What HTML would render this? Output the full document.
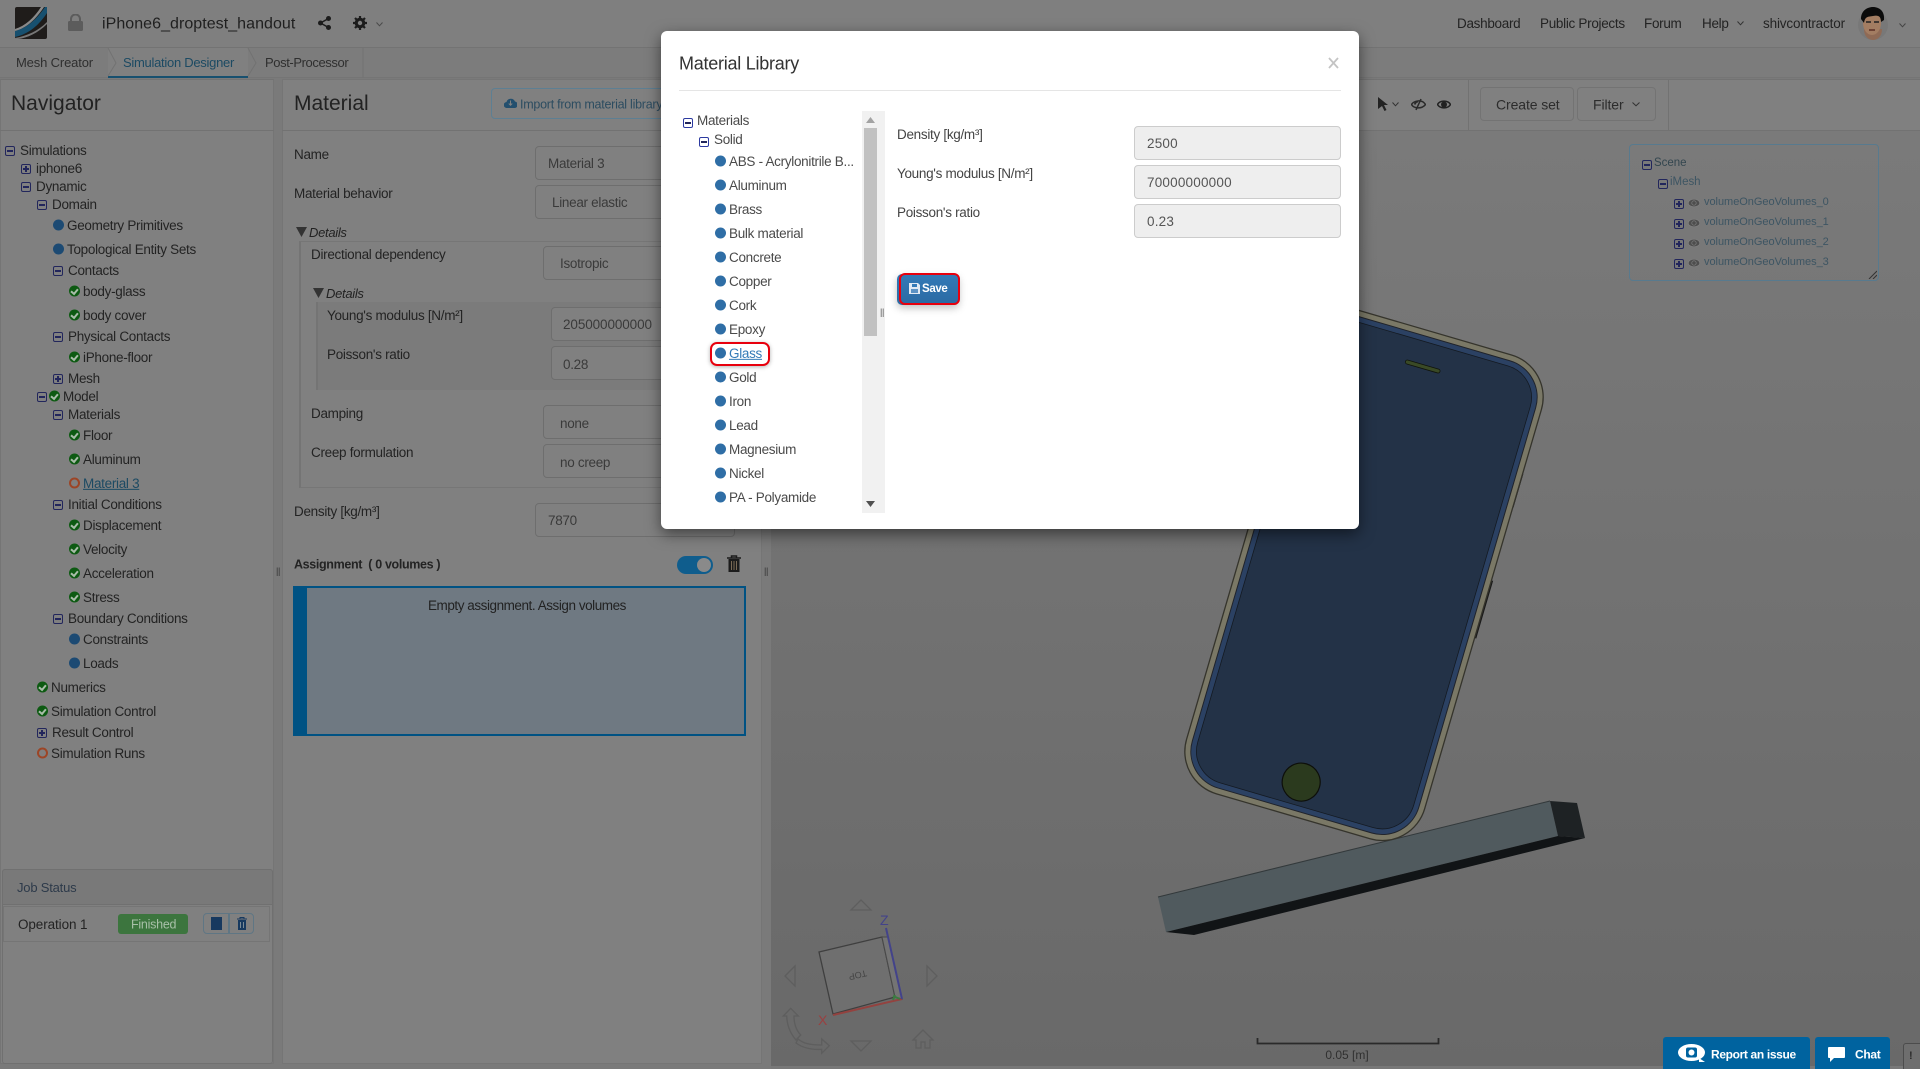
<!DOCTYPE html>
<html lang="en"><head><meta charset="utf-8"><title>Material Library</title>
<style>
html,body{margin:0;padding:0;width:1920px;height:1069px;overflow:hidden;background:#7a7a7a}
body{position:relative;font-family:"Liberation Sans",sans-serif;font-size:13.5px;color:#232323}
.a{position:absolute;box-sizing:border-box}
.t{position:absolute;white-space:nowrap;line-height:1;transform:translateY(calc(-50% + .6px));letter-spacing:-.3px}
.m,.p{position:absolute;width:10px;height:10px;border:1px solid #22265c;border-radius:2px;box-sizing:border-box;transform:translateY(-40%)}
.m:after,.p:after{content:"";position:absolute;left:1px;right:1px;top:3px;height:2px;background:#22265c}
.p:before{content:"";position:absolute;top:1px;bottom:1px;left:3px;width:2px;background:#22265c}
.d{position:absolute;width:11px;height:11px;border-radius:50%;background:#1c4a73;transform:translateY(-50%)}
.c{position:absolute;width:11px;height:11px;border-radius:50%;background:#0d5a12;transform:translateY(-50%)}
.c:after{content:"";position:absolute;left:3px;top:1.5px;width:3px;height:5px;border:solid #a9bda9;border-width:0 2px 2px 0;transform:rotate(40deg)}
.r{position:absolute;width:11px;height:11px;border-radius:50%;border:2px solid #9c4526;box-sizing:border-box;transform:translateY(-50%)}
.f{position:absolute;box-sizing:border-box;border:1px solid #6e6e6e;border-radius:4px;background:#808080}
.mi .d{background:#2f6ea6}
.mi .t{color:#4a4a4a}
.in{position:absolute;box-sizing:border-box;left:1134px;width:207px;height:34px;background:#eeeeee;border:1px solid #cccccc;border-radius:4px;color:#555;padding-left:12px;line-height:33px;letter-spacing:.2px}
.bl{color:#3d5563;font-size:11px;letter-spacing:-.03px}
</style></head><body>

<!-- header -->
<div class="a" style="left:0;top:0;width:1920px;height:48px;background:#7f7f7f;border-bottom:1px solid #737373"></div>
<svg class="a" style="left:15px;top:7px" width="32" height="32" viewBox="0 0 32 32"><rect width="32" height="32" rx="2" fill="#1f1c1a"/><path d="M0 24C12 21 22 12 30 0H32V6C24 18 14 27 0 30Z" fill="#17506f"/><path d="M0 22C10 19 19 11 26 0H29C21 12 12 21 0 24Z" fill="#8a8a8a"/><path d="M0 31C12 29 23 24 32 15V17C23 26 12 31 3 32H0Z" fill="#777"/></svg>
<svg class="a" style="left:68px;top:14px" width="15" height="17" viewBox="0 0 15 17"><path d="M3 8V5a4.500 4.500 0 0 1 9 0V8" fill="none" stroke="#5c5c5c" stroke-width="2"/><rect x="0" y="7" width="15" height="10" rx="1.500" fill="#5c5c5c"/></svg>
<div class="t" style="left:102px;top:24px;font-size:16px;font-weight:400;color:#1f1f1f;letter-spacing:.05px">iPhone6_droptest_handout</div>
<svg class="a" style="left:318px;top:16px" width="13" height="14" viewBox="0 0 13 14"><circle cx="10.500" cy="2.500" r="2.500" fill="#1c1c1c"/><circle cx="2.500" cy="7" r="2.500" fill="#1c1c1c"/><circle cx="10.500" cy="11.500" r="2.500" fill="#1c1c1c"/><path d="M10.500 2.500L2.500 7L10.500 11.500" stroke="#1c1c1c" stroke-width="1.500" fill="none"/></svg>
<svg class="a" style="left:353px;top:16px" width="14" height="14" viewBox="0 0 14 14"><circle cx="7" cy="7" r="3.800" fill="none" stroke="#1c1c1c" stroke-width="3"/><path d="M7 0V14M0 7H14M2 2L12 12M12 2L2 12" stroke="#1c1c1c" stroke-width="2.200"/><circle cx="7" cy="7" r="2.200" fill="#7f7f7f"/></svg>
<svg class="a" style="left:376px;top:22px" width="7" height="5" viewBox="0 0 7 5"><path d="M.5 .5L3.500 3.800L6.500 .5" fill="none" stroke="#4a4a4a"/></svg>
<div class="t" style="left:1457px;top:23px">Dashboard</div>
<div class="t" style="left:1540px;top:23px">Public Projects</div>
<div class="t" style="left:1644px;top:23px">Forum</div>
<div class="t" style="left:1702px;top:23px">Help</div>
<svg class="a" style="left:1737px;top:21px" width="7" height="5" viewBox="0 0 7 5"><path d="M.5 .5L3.500 3.800L6.500 .5" fill="none" stroke="#333"/></svg>
<div class="t" style="left:1763px;top:23px;letter-spacing:-.15px">shivcontractor</div>
<svg class="a" style="left:1858px;top:7px" width="30" height="33" viewBox="0 0 30 33"><ellipse cx="15" cy="18" rx="15" ry="15" fill="#787878"/><path d="M6 22C6 30 11 33 15 33S24 30 24 22Z" fill="#8f6a55"/><ellipse cx="14" cy="16" rx="9" ry="12" fill="#a37d62"/><path d="M3 12C3 3 10 0 15 0S27 3 26 13L23 15C23 9 20 8 15 9C10 10 7 9 6 16Z" fill="#0b0b0b"/><path d="M8 15h5M16 15h5" stroke="#222" stroke-width="1.500"/><path d="M11 23h6" stroke="#5b2f25" stroke-width="1.500"/></svg>
<svg class="a" style="left:1899px;top:23px" width="7" height="5" viewBox="0 0 7 5"><path d="M.5 .5L3.500 3.800L6.500 .5" fill="none" stroke="#444"/></svg>

<!-- tabs -->
<div class="a" style="left:0;top:48px;width:1920px;height:30px;background:#7c7c7c;border-bottom:1px solid #757575"></div>
<div class="a" style="left:108px;top:48px;width:140px;height:30px;background:#808080;border-bottom:2px solid #17506f"></div>
<svg class="a" style="left:100px;top:48px" width="270" height="30" viewBox="0 0 270 30" fill="none" stroke="#727272"><path d="M8 0L16 15L8 28"/><path d="M148 0L156 15L148 28"/><path d="M263 0V30"/></svg>
<div class="t" style="left:16px;top:62px;color:#2f2f2f;font-size:13px;letter-spacing:-.15px">Mesh Creator</div>
<div class="t" style="left:123px;top:62px;color:#1c4a63;font-size:13px;letter-spacing:-.28px">Simulation Designer</div>
<div class="t" style="left:265px;top:62px;color:#2f2f2f;font-size:13px;letter-spacing:-.4px">Post-Processor</div>

<!-- navigator -->
<div class="a" style="left:0;top:79px;width:274px;height:985px;background:#808080;border:1px solid #757575;border-top-color:#727272"></div>
<div class="a" style="left:0;top:130px;width:274px;height:1px;background:#727272"></div>
<div class="t" style="left:11px;top:103px;font-size:21px;font-weight:400;color:#222;letter-spacing:0">Navigator</div>

<i class="m" style="left:5px;top:150px"></i><div class="t" style="left:20px;top:150px">Simulations</div>
<i class="p" style="left:21px;top:168px"></i><div class="t" style="left:36px;top:168px">iphone6</div>
<i class="m" style="left:21px;top:186px"></i><div class="t" style="left:36px;top:186px">Dynamic</div>
<i class="m" style="left:37px;top:204px"></i><div class="t" style="left:52px;top:204px">Domain</div>
<i class="d" style="left:53px;top:225px"></i><div class="t" style="left:67px;top:225px">Geometry Primitives</div>
<i class="d" style="left:53px;top:249px"></i><div class="t" style="left:67px;top:249px">Topological Entity Sets</div>
<i class="m" style="left:53px;top:270px"></i><div class="t" style="left:68px;top:270px">Contacts</div>
<i class="c" style="left:69px;top:291px"></i><div class="t" style="left:83px;top:291px">body-glass</div>
<i class="c" style="left:69px;top:315px"></i><div class="t" style="left:83px;top:315px">body cover</div>
<i class="m" style="left:53px;top:336px"></i><div class="t" style="left:68px;top:336px">Physical Contacts</div>
<i class="c" style="left:69px;top:357px"></i><div class="t" style="left:83px;top:357px">iPhone-floor</div>
<i class="p" style="left:53px;top:378px"></i><div class="t" style="left:68px;top:378px">Mesh</div>
<i class="m" style="left:37px;top:396px"></i><i class="c" style="left:49px;top:396px"></i><div class="t" style="left:63px;top:396px">Model</div>
<i class="m" style="left:53px;top:414px"></i><div class="t" style="left:68px;top:414px">Materials</div>
<i class="c" style="left:69px;top:435px"></i><div class="t" style="left:83px;top:435px">Floor</div>
<i class="c" style="left:69px;top:459px"></i><div class="t" style="left:83px;top:459px">Aluminum</div>
<i class="r" style="left:69px;top:483px"></i><div class="t" style="left:83px;top:483px;color:#1c4a63;text-decoration:underline">Material 3</div>
<i class="m" style="left:53px;top:504px"></i><div class="t" style="left:68px;top:504px">Initial Conditions</div>
<i class="c" style="left:69px;top:525px"></i><div class="t" style="left:83px;top:525px">Displacement</div>
<i class="c" style="left:69px;top:549px"></i><div class="t" style="left:83px;top:549px">Velocity</div>
<i class="c" style="left:69px;top:573px"></i><div class="t" style="left:83px;top:573px">Acceleration</div>
<i class="c" style="left:69px;top:597px"></i><div class="t" style="left:83px;top:597px">Stress</div>
<i class="m" style="left:53px;top:618px"></i><div class="t" style="left:68px;top:618px">Boundary Conditions</div>
<i class="d" style="left:69px;top:639px"></i><div class="t" style="left:83px;top:639px">Constraints</div>
<i class="d" style="left:69px;top:663px"></i><div class="t" style="left:83px;top:663px">Loads</div>
<i class="c" style="left:37px;top:687px"></i><div class="t" style="left:51px;top:687px">Numerics</div>
<i class="c" style="left:37px;top:711px"></i><div class="t" style="left:51px;top:711px">Simulation Control</div>
<i class="p" style="left:37px;top:732px"></i><div class="t" style="left:52px;top:732px">Result Control</div>
<i class="r" style="left:37px;top:753px"></i><div class="t" style="left:51px;top:753px">Simulation Runs</div>

<!-- job status -->
<div class="a" style="left:2px;top:869px;width:271px;height:195px;border:1px solid #707070;border-radius:3px;background:#808080"></div>
<div class="a" style="left:2px;top:869px;width:271px;height:36px;background:#797979;border:1px solid #707070;border-radius:3px 3px 0 0"></div>
<div class="t" style="left:17px;top:887px;color:#2d3a4a;font-size:13px;letter-spacing:-.2px">Job Status</div>
<div class="a" style="left:3px;top:906px;width:267px;height:36px;border:1px solid #757575"></div>
<div class="t" style="left:18px;top:924px;letter-spacing:-.1px">Operation 1</div>
<div class="a" style="left:118px;top:914px;width:70px;height:20px;background:#3c753e;border-radius:3px"></div>
<div class="t" style="left:131px;top:924px;color:#a8c0a8;font-size:12.500px;letter-spacing:-.25px">Finished</div>
<div class="a" style="left:203px;top:913px;width:26px;height:21px;border:1px solid #5f7684;border-radius:4px 0 0 4px"></div>
<div class="a" style="left:229px;top:913px;width:25px;height:21px;border:1px solid #5f7684;border-radius:0 4px 4px 0"></div>
<div class="a" style="left:211px;top:917px;width:11px;height:13px;background:#17395f"></div>
<svg class="a" style="left:237px;top:917px" width="10" height="13" viewBox="0 0 10 13"><path d="M0 2H10M3 2V.5H7V2" stroke="#17395f" fill="none"/><path d="M1 3H9V13H1Z" fill="#17395f"/><path d="M3.500 5V11M6.500 5V11" stroke="#7a8a95"/></svg>

<!-- material panel -->
<div class="a" style="left:282px;top:79px;width:480px;height:985px;background:#808080;border:1px solid #757575"></div>
<div class="a" style="left:282px;top:130px;width:480px;height:1px;background:#727272"></div>
<div class="t" style="left:294px;top:103px;font-size:21px;color:#222;letter-spacing:0">Material</div>
<div class="a" style="left:491px;top:88px;width:200px;height:31px;border:1px solid #5d7f93;border-radius:4px"></div>
<svg class="a" style="left:504px;top:97px" width="13" height="11" viewBox="0 0 13 11"><path d="M3 11a3 3 0 0 1-.5-6A4.500 4.500 0 0 1 11 4.500a3.200 3.200 0 0 1-1 6.500Z" fill="#234f6e"/><path d="M6.500 3.500V8M4.800 6.500L6.500 8.300L8.200 6.500" stroke="#808080" fill="none"/></svg>
<div class="t" style="left:520px;top:104px;font-size:12.500px;color:#2c4c60;letter-spacing:-.25px">Import from material library</div>

<div class="t" style="left:294px;top:154px">Name</div>
<div class="f" style="left:535px;top:146px;width:200px;height:34px"></div><div class="t" style="left:548px;top:163px;color:#3a3a3a">Material 3</div>
<div class="t" style="left:294px;top:193px">Material behavior</div>
<div class="f" style="left:535px;top:185px;width:200px;height:34px"></div><div class="t" style="left:552px;top:202px;color:#3a3a3a">Linear elastic</div>
<svg class="a" style="left:296px;top:227px" width="11" height="10"><path d="M0 0H11L5.500 10Z" fill="#333"/></svg>
<div class="t" style="left:309px;top:232px;font-style:italic;font-size:13px;color:#222">Details</div>
<div class="a" style="left:299px;top:241px;width:460px;height:247px;border-left:2px solid #747474;border-top:1px solid #767676;border-bottom:1px solid #767676"></div>
<div class="t" style="left:311px;top:254px">Directional dependency</div>
<div class="f" style="left:543px;top:246px;width:200px;height:34px"></div><div class="t" style="left:560px;top:263px;color:#3a3a3a">Isotropic</div>
<svg class="a" style="left:313px;top:288px" width="11" height="10"><path d="M0 0H11L5.500 10Z" fill="#333"/></svg>
<div class="t" style="left:326px;top:293px;font-style:italic;font-size:13px;color:#222">Details</div>
<div class="a" style="left:316px;top:302px;width:440px;height:88px;background:#7b7b7b;border-left:2px solid #747474"></div>
<div class="t" style="left:327px;top:315px">Young's modulus [N/m²]</div>
<div class="f" style="left:551px;top:307px;width:190px;height:34px"></div><div class="t" style="left:563px;top:324px;color:#3a3a3a;letter-spacing:-.1px">205000000000</div>
<div class="t" style="left:327px;top:354px">Poisson's ratio</div>
<div class="f" style="left:551px;top:346px;width:190px;height:34px"></div><div class="t" style="left:563px;top:364px;color:#3a3a3a">0.28</div>
<div class="t" style="left:311px;top:413px">Damping</div>
<div class="f" style="left:543px;top:405px;width:200px;height:34px"></div><div class="t" style="left:560px;top:423px;color:#3a3a3a">none</div>
<div class="t" style="left:311px;top:452px">Creep formulation</div>
<div class="f" style="left:543px;top:444px;width:200px;height:34px"></div><div class="t" style="left:560px;top:462px;color:#3a3a3a">no creep</div>
<div class="t" style="left:294px;top:511px">Density [kg/m³]</div>
<div class="f" style="left:535px;top:503px;width:200px;height:34px"></div><div class="t" style="left:548px;top:520px;color:#3a3a3a">7870</div>
<div class="t" style="left:294px;top:564px;font-weight:bold;font-size:12.500px;letter-spacing:-.35px">Assignment &nbsp;( 0 volumes )</div>
<div class="a" style="left:677px;top:556px;width:36px;height:18px;border-radius:9px;background:#0f5d8d"></div>
<div class="a" style="left:697px;top:558px;width:14px;height:14px;border-radius:50%;background:#8a8a8a"></div>
<svg class="a" style="left:727px;top:555px" width="14" height="17" viewBox="0 0 14 17"><path d="M0 3H14M4.500 3V1H9.500V3" stroke="#1c1c1c" stroke-width="1.500" fill="none"/><path d="M1.500 4H12.500V17H1.500Z" fill="#1c1c1c"/><path d="M4.500 6V15M7 6V15M9.500 6V15" stroke="#7a6a55"/></svg>
<div class="a" style="left:293px;top:586px;width:453px;height:150px;background:#6f7982;border:2px solid #005283;border-left-width:14px"></div>
<div class="t" style="left:428px;top:605px;color:#222;letter-spacing:-.45px">Empty assignment. Assign volumes</div>
<div class="t" style="left:276px;top:571px;font-size:9px;color:#333">||</div>
<div class="t" style="left:764px;top:571px;font-size:9px;color:#333">||</div>

<!-- viewer -->
<div class="a" style="left:771px;top:79px;width:1149px;height:52px;background:#808080;border-top:1px solid #727272;border-bottom:1px solid #727272"></div>
<div class="a" style="left:771px;top:131px;width:1149px;height:935px;background:linear-gradient(#7a7a7a,#696969)"></div>
<div class="a" style="left:771px;top:1066px;width:1149px;height:3px;background:#787878"></div>
<div class="a" style="left:1468px;top:80px;width:1px;height:50px;background:#727272"></div>
<div class="a" style="left:1668px;top:80px;width:1px;height:50px;background:#727272"></div>
<svg class="a" style="left:1378px;top:97px" width="11" height="14" viewBox="0 0 11 14"><path d="M0 0L10 8H6L8.500 13L6.500 14L4 9L0 12Z" fill="#222"/></svg>
<svg class="a" style="left:1392px;top:102px" width="7" height="5" viewBox="0 0 7 5"><path d="M.5 .5L3.500 3.800L6.500 .5" fill="none" stroke="#333"/></svg>
<svg class="a" style="left:1411px;top:98px" width="15" height="13" viewBox="0 0 15 13"><path d="M.5 6.500C3 2.500 11 1 14.500 6.500C11 11 3 11 .5 6.500Z" fill="none" stroke="#2a2a2a" stroke-width="1.500"/><path d="M5 12L10 1" stroke="#2a2a2a" stroke-width="1.500"/><path d="M4 6.500a3 3 0 0 1 3-3" stroke="#2a2a2a" stroke-width="2" fill="none"/></svg>
<svg class="a" style="left:1437px;top:99px" width="14" height="11" viewBox="0 0 14 11"><path d="M.5 5.500C3 1 11 1 13.500 5.500C11 10 3 10 .5 5.500Z" fill="none" stroke="#222" stroke-width="1.500"/><circle cx="7" cy="5.500" r="3" fill="#222"/></svg>
<div class="f" style="left:1480px;top:87px;width:94px;height:34px;background:#808080;border-color:#737373"></div>
<div class="t" style="left:1496px;top:104px;color:#2c2c2c;font-size:14px;letter-spacing:-.1px">Create set</div>
<div class="f" style="left:1577px;top:87px;width:79px;height:34px;background:#808080;border-color:#737373"></div>
<div class="t" style="left:1593px;top:104px;color:#2c2c2c;font-size:14px;letter-spacing:-.1px">Filter</div>
<svg class="a" style="left:1632px;top:102px" width="8" height="5" viewBox="0 0 8 5"><path d="M.5 .5L4 3.800L7.500 .5" fill="none" stroke="#333"/></svg>

<!-- 3d scene -->
<svg class="a" style="left:771px;top:131px" width="1149" height="938" viewBox="771 131 1149 938">
  <polygon points="1158,897 1550,801 1558,836 1166,932" fill="#505a5e"/>
  <path d="M1158,897L1550,801" stroke="#33393b"/>
  <polygon points="1550,801 1577,803 1585,838 1558,836" fill="#1e2224"/>
  <polygon points="1166,932 1558,836 1585,838 1194,935" fill="#111416"/>
  <g transform="translate(1364 574.400) rotate(16.300)">
    <path d="M124 -141V-106M125 -30V30" stroke="#1a1a1a" stroke-width="1.500"/>
    <rect x="-124" y="-252" width="248" height="504" rx="44" fill="#7a7866" stroke="#35342c" stroke-width="1.300"/>
    <rect x="-118" y="-246" width="236" height="492" rx="38" fill="#2b4163" stroke="#20232a" stroke-width="1"/>
    <rect x="-112.500" y="-240.500" width="225" height="481" rx="33" fill="#233247" stroke="#141a22" stroke-width=".8"/>
    <rect x="-20" y="-218" width="36" height="4" rx="2" fill="#3a4a26" stroke="#10140c" stroke-width=".8"/>
    <circle cx="-2" cy="217" r="19" fill="#2b3a1e" stroke="#0d0f0a" stroke-width="1.200"/>
  </g>
  <!-- scale -->
  <path d="M1257.500 1038V1043.500H1438.500V1038" fill="none" stroke="#2a2a2a" stroke-width="1.800"/>
  <text x="1347" y="1059" text-anchor="middle" font-family="Liberation Sans,sans-serif" font-size="12" fill="#303030">0.05 [m]</text>
  <!-- nav cube -->
  <g fill="none" stroke="#5e5e5e" stroke-width="1.300">
    <path d="M861 900L851 910H871Z"/>
    <path d="M861 1051L851 1041H871Z"/>
    <path d="M785 976L795 966V986Z"/>
    <path d="M937 976L927 966V986Z"/>
    <path d="M923 1030L913 1040H916V1048H921V1042H925V1048H930V1040H933Z"/>
    <path d="M790.700 1008.300L798.300 1016H794C794 1024 796 1030 800.700 1035L796 1040C790 1033 787 1025 786.700 1016H783.300Z"/>
    <path d="M798 1039C803 1043 808 1045 821.700 1045V1039L829.300 1045.700L821.700 1053.300V1049.300C811 1050 803 1048 796 1043Z"/>
  </g>
  <polygon points="819,952 882,937 895,997 833,1014" fill="#6f6f6f" stroke="#3f3f3f" stroke-width="1.300"/>
  <polygon points="882,937 888,937 902,999 895,997" fill="#747474" stroke="#4a4a4a"/>
  <path d="M833 1015L902 999" stroke="#93423f" stroke-width="2"/>
  <path d="M902 999L886 928" stroke="#43438a" stroke-width="2"/>
  <path d="M893 996L900 999M893 1000L895 995" stroke="#3b7a40" stroke-width="2"/>
  <text x="818" y="1025" font-family="Liberation Sans,sans-serif" font-size="14" fill="#9a4040">X</text>
  <text x="880" y="925" font-family="Liberation Sans,sans-serif" font-size="14" fill="#43438a">Z</text>
  <text transform="translate(858 976) rotate(-193)" text-anchor="middle" y="4" font-family="Liberation Sans,sans-serif" font-size="9" fill="#444">TOP</text>
</svg>

<!-- scene tree -->
<div class="a" style="left:1629px;top:144px;width:250px;height:137px;border:1px solid #587a8e;border-radius:4px"></div>
<svg class="a" style="left:1868px;top:270px" width="9" height="9"><path d="M1 9L9 1M5 9L9 5" stroke="#333"/></svg>
<i class="m" style="left:1642px;top:164px"></i><div class="t bl" style="left:1654px;top:163px;color:#33464f;font-size:11.500px">Scene</div>
<i class="m" style="left:1658px;top:183px"></i><div class="t bl" style="left:1670px;top:182px;font-size:11.500px">iMesh</div>
<i class="p" style="left:1674px;top:203px"></i><div class="t bl" style="left:1704px;top:202px">volumeOnGeoVolumes_0</div>
<i class="p" style="left:1674px;top:223px"></i><div class="t bl" style="left:1704px;top:222px">volumeOnGeoVolumes_1</div>
<i class="p" style="left:1674px;top:243px"></i><div class="t bl" style="left:1704px;top:242px">volumeOnGeoVolumes_2</div>
<i class="p" style="left:1674px;top:263px"></i><div class="t bl" style="left:1704px;top:262px">volumeOnGeoVolumes_3</div>
<svg class="a" style="left:1688px;top:198px" width="12" height="72" viewBox="0 0 12 72" fill="#4e4e4e" stroke="#808080" stroke-width=".7"><ellipse cx="6" cy="5" rx="5.800" ry="3.800"/><circle cx="6" cy="5" r="2.200"/><ellipse cx="6" cy="25" rx="5.800" ry="3.800"/><circle cx="6" cy="25" r="2.200"/><ellipse cx="6" cy="45" rx="5.800" ry="3.800"/><circle cx="6" cy="45" r="2.200"/><ellipse cx="6" cy="65" rx="5.800" ry="3.800"/><circle cx="6" cy="65" r="2.200"/></svg>

<!-- bottom buttons -->
<div class="a" style="left:1663px;top:1037px;width:147px;height:32px;background:#00639f;border-radius:3px 3px 0 0"></div>
<svg class="a" style="left:1678px;top:1044px" width="28" height="18" viewBox="0 0 28 18"><ellipse cx="13.500" cy="8.500" rx="13.500" ry="8.500" fill="#fff"/><rect x="8" y="3.500" width="11" height="10" rx="2" fill="#00639f"/><ellipse cx="13.500" cy="8.500" rx="3" ry="3" fill="#fff"/><path d="M21 14L27 18H21Z" fill="#fff"/></svg>
<div class="t" style="left:1711px;top:1054px;color:#fff;font-size:12px;font-weight:bold;letter-spacing:-.35px">Report an issue</div>
<div class="a" style="left:1815px;top:1037px;width:75px;height:32px;background:#00639f;border-radius:3px 3px 0 0"></div>
<svg class="a" style="left:1828px;top:1047px" width="17" height="15" viewBox="0 0 17 15"><path d="M1 0H16a1 1 0 0 1 1 1V10a1 1 0 0 1-1 1H6L2 15V11H1a1 1 0 0 1-1-1V1a1 1 0 0 1 1-1Z" fill="#fff"/></svg>
<div class="t" style="left:1855px;top:1054px;color:#fff;font-size:12px;font-weight:bold;letter-spacing:-.3px">Chat</div>
<div class="a" style="left:1903px;top:1043px;width:20px;height:30px;border:1px solid #4c4c4c;border-radius:3px;background:#6e6e6e"></div>
<div class="t" style="left:1909px;top:1056px;color:#2c2c2c;font-size:11px;font-weight:bold">!</div>

<!-- modal -->
<div class="a" style="left:661px;top:31px;width:698px;height:498px;background:#fff;border-radius:6px;box-shadow:0 5px 15px rgba(0,0,0,.5)"></div>
<div class="t" style="left:679px;top:63px;font-size:18px;color:#333;letter-spacing:-.25px">Material Library</div>
<svg class="a" style="left:1328px;top:57px" width="11" height="12" viewBox="0 0 11 12"><path d="M1 1L10 11M10 1L1 11" stroke="#c4c4c4" stroke-width="1.800"/></svg>
<div class="a" style="left:679px;top:90px;width:662px;height:1px;background:#e5e5e5"></div>

<div class="mi">
<i class="m" style="left:683px;top:122px;border-color:#2c3aa0"></i><div class="t" style="left:697px;top:120px">Materials</div>
<i class="m" style="left:699px;top:141px;border-color:#2c3aa0"></i><div class="t" style="left:714px;top:139px">Solid</div>
<i class="d" style="left:715px;top:161px"></i><div class="t" style="left:729px;top:161px">ABS - Acrylonitrile B...</div>
<i class="d" style="left:715px;top:185px"></i><div class="t" style="left:729px;top:185px">Aluminum</div>
<i class="d" style="left:715px;top:209px"></i><div class="t" style="left:729px;top:209px">Brass</div>
<i class="d" style="left:715px;top:233px"></i><div class="t" style="left:729px;top:233px">Bulk material</div>
<i class="d" style="left:715px;top:257px"></i><div class="t" style="left:729px;top:257px">Concrete</div>
<i class="d" style="left:715px;top:281px"></i><div class="t" style="left:729px;top:281px">Copper</div>
<i class="d" style="left:715px;top:305px"></i><div class="t" style="left:729px;top:305px">Cork</div>
<i class="d" style="left:715px;top:329px"></i><div class="t" style="left:729px;top:329px">Epoxy</div>
<i class="d" style="left:715px;top:353px"></i><div class="t" style="left:729px;top:353px;color:#337ab7;text-decoration:underline">Glass</div>
<i class="d" style="left:715px;top:377px"></i><div class="t" style="left:729px;top:377px">Gold</div>
<i class="d" style="left:715px;top:401px"></i><div class="t" style="left:729px;top:401px">Iron</div>
<i class="d" style="left:715px;top:425px"></i><div class="t" style="left:729px;top:425px">Lead</div>
<i class="d" style="left:715px;top:449px"></i><div class="t" style="left:729px;top:449px">Magnesium</div>
<i class="d" style="left:715px;top:473px"></i><div class="t" style="left:729px;top:473px">Nickel</div>
<i class="d" style="left:715px;top:497px"></i><div class="t" style="left:729px;top:497px">PA - Polyamide</div>
</div>
<div class="a" style="left:710px;top:342px;width:60px;height:24px;border:2px solid #e8000d;border-radius:7px;box-shadow:0 1px 4px rgba(0,0,0,.3)"></div>

<div class="a" style="left:862px;top:111px;width:23px;height:402px;background:#f1f1f1"></div>
<div class="a" style="left:864px;top:128px;width:13px;height:208px;background:#c1c1c1"></div>
<svg class="a" style="left:866px;top:117px" width="9" height="6"><path d="M4.500 0L9 6H0Z" fill="#a3a3a3"/></svg>
<svg class="a" style="left:866px;top:501px" width="9" height="6"><path d="M4.500 6L9 0H0Z" fill="#505050"/></svg>
<div class="t" style="left:880px;top:312px;font-size:9px;color:#555">||</div>

<div class="t" style="left:897px;top:134px;color:#444">Density [kg/m³]</div>
<div class="t" style="left:897px;top:173px;color:#444">Young's modulus [N/m²]</div>
<div class="t" style="left:897px;top:212px;color:#444">Poisson's ratio</div>
<div class="in" style="top:126px">2500</div>
<div class="in" style="top:165px">70000000000</div>
<div class="in" style="top:204px">0.23</div>

<div class="a" style="left:897px;top:274px;width:62px;height:31px;background:linear-gradient(#337ab7,#2a6aa3);border-radius:5px;box-shadow:0 3px 8px rgba(0,0,0,.25)"></div>
<div class="a" style="left:899px;top:273px;width:61px;height:32px;border:2px solid #e8000d;border-radius:6px"></div>
<svg class="a" style="left:909px;top:283px" width="11" height="11" viewBox="0 0 11 11"><path d="M0 0H9L11 2V11H0Z" fill="#dfe9f3"/><rect x="3" y="1" width="5" height="3" fill="#337ab7"/><rect x="2" y="6" width="7" height="4" fill="#5b92c4"/></svg>
<div class="t" style="left:922px;top:289px;color:#fff;font-size:11.500px;font-weight:bold;letter-spacing:-.35px">Save</div>

</body></html>
